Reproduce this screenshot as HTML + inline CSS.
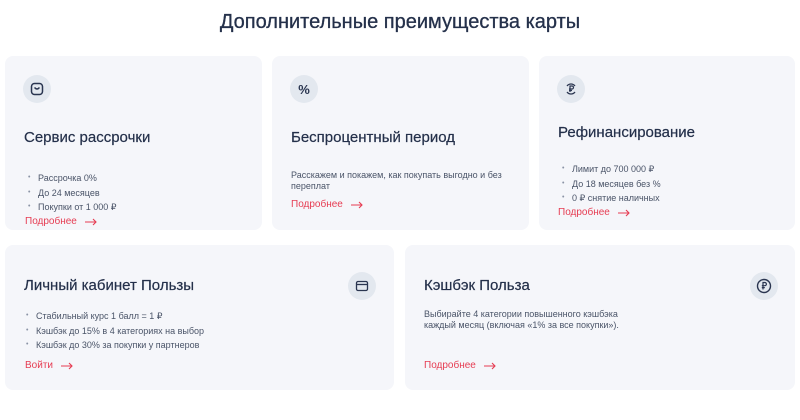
<!DOCTYPE html>
<html><head><meta charset="utf-8"><style>
*{margin:0;padding:0;box-sizing:border-box}
body{width:800px;height:420px;background:#fff;font-family:"Liberation Sans",sans-serif;color:#2a3550;position:relative;overflow:hidden}
.t{position:absolute;left:0;width:800px;text-align:center;top:11px;font-size:20px;color:#24304a;-webkit-text-stroke:0.3px #24304a}
.c{position:absolute;background:#f5f6fa;border-radius:8px}
.a{position:absolute;white-space:nowrap}
.ic{position:absolute;width:28px;height:28px;border-radius:50%;background:#e3e8ef;display:flex;align-items:center;justify-content:center}
.h{font-size:15px;color:#24304a;-webkit-text-stroke:0.2px #24304a}
.s{font-size:9px;color:#4a5468}
.l{font-size:10px;color:#e63c52;display:flex;align-items:center}
.l svg{margin-left:8px}
ul{list-style:none}
li{position:relative;padding-left:14px}
li:before{content:"•";position:absolute;left:4px;color:#8a93a5;font-size:7px}
</style></head><body>
<div class="t">Дополнительные преимущества карты</div>

<div class="c" style="left:5px;top:56px;width:257px;height:174px"></div>
<div class="c" style="left:272px;top:56px;width:257px;height:174px"></div>
<div class="c" style="left:539px;top:56px;width:256px;height:174px"></div>
<div class="c" style="left:5px;top:245px;width:389px;height:145px"></div>
<div class="c" style="left:405px;top:245px;width:390px;height:145px"></div>

<div class="ic" style="left:23px;top:75px"><svg width="14" height="14" viewBox="0 0 14 14"><rect x="1.5" y="1.5" width="11" height="11" rx="3" fill="none" stroke="#2a3550" stroke-width="1.5"/><path d="M4.5 5.5q2.5 3 5 0" fill="none" stroke="#2a3550" stroke-width="1.4"/></svg></div>
<div class="a h" style="left:24px;top:129px">Сервис рассрочки</div>
<ul class="a s" style="left:24px;top:171px;line-height:14.5px"><li>Рассрочка 0%</li><li>До 24 месяцев</li><li>Покупки от 1 000 ₽</li></ul>
<div class="a l" style="left:25px;top:216px">Подробнее<svg width="12" height="8" viewBox="0 0 12 8"><path d="M0 4h11M8 1l3 3-3 3" fill="none" stroke="#e63c52" stroke-width="1.1"/></svg></div>

<div class="ic" style="left:290px;top:75px;font-size:13px;font-weight:bold;color:#2a3550">%</div>
<div class="a h" style="left:291px;top:129px">Беспроцентный период</div>
<div class="a s" style="left:291px;top:170px;line-height:11px;white-space:normal;width:220px">Расскажем и покажем, как покупать выгодно и без переплат</div>
<div class="a l" style="left:291px;top:199px">Подробнее<svg width="12" height="8" viewBox="0 0 12 8"><path d="M0 4h11M8 1l3 3-3 3" fill="none" stroke="#e63c52" stroke-width="1.1"/></svg></div>

<div class="ic" style="left:557px;top:75px"><svg width="14" height="14" viewBox="0 0 14 14"><path d="M3 4A5 5 0 0 1 11 4M11 10A5 5 0 0 1 3 10" fill="none" stroke="#2a3550" stroke-width="1.3"/><path d="M6 10V4h2a1.5 1.5 0 0 1 0 3H5M5 8.5h3" fill="none" stroke="#2a3550" stroke-width="1.2"/></svg></div>
<div class="a h" style="left:558px;top:124px">Рефинансирование</div>
<ul class="a s" style="left:558px;top:162px;line-height:14.5px"><li>Лимит до 700 000 ₽</li><li>До 18 месяцев без %</li><li>0 ₽ снятие наличных</li></ul>
<div class="a l" style="left:558px;top:207px">Подробнее<svg width="12" height="8" viewBox="0 0 12 8"><path d="M0 4h11M8 1l3 3-3 3" fill="none" stroke="#e63c52" stroke-width="1.1"/></svg></div>

<div class="ic" style="left:348px;top:272px"><svg width="14" height="14" viewBox="0 0 14 14"><rect x="1.5" y="2.5" width="11" height="9" rx="1.5" fill="none" stroke="#2a3550" stroke-width="1.3"/><path d="M1.5 5.5h11" stroke="#2a3550" stroke-width="1.3"/></svg></div>
<div class="a h" style="left:24px;top:277px">Личный кабинет Пользы</div>
<ul class="a s" style="left:22px;top:309px;line-height:14.5px"><li>Стабильный курс 1 балл = 1 ₽</li><li>Кэшбэк до 15% в 4 категориях на выбор</li><li>Кэшбэк до 30% за покупки у партнеров</li></ul>
<div class="a l" style="left:25px;top:360px">Войти<svg width="12" height="8" viewBox="0 0 12 8"><path d="M0 4h11M8 1l3 3-3 3" fill="none" stroke="#e63c52" stroke-width="1.1"/></svg></div>

<div class="ic" style="left:750px;top:272px"><svg width="16" height="16" viewBox="0 0 16 16"><circle cx="8" cy="8" r="6.5" fill="none" stroke="#2a3550" stroke-width="1.4"/><path d="M7 11.5V4.5h1.8a1.6 1.6 0 0 1 0 3.2H5.8M5.8 9.6h3" fill="none" stroke="#2a3550" stroke-width="1.2"/></svg></div>
<div class="a h" style="left:424px;top:277px">Кэшбэк Польза</div>
<div class="a s" style="left:424px;top:309px;line-height:11px">Выбирайте 4 категории повышенного кэшбэка<br>каждый месяц (включая «1% за все покупки»).</div>
<div class="a l" style="left:424px;top:360px">Подробнее<svg width="12" height="8" viewBox="0 0 12 8"><path d="M0 4h11M8 1l3 3-3 3" fill="none" stroke="#e63c52" stroke-width="1.1"/></svg></div>
</body></html>
